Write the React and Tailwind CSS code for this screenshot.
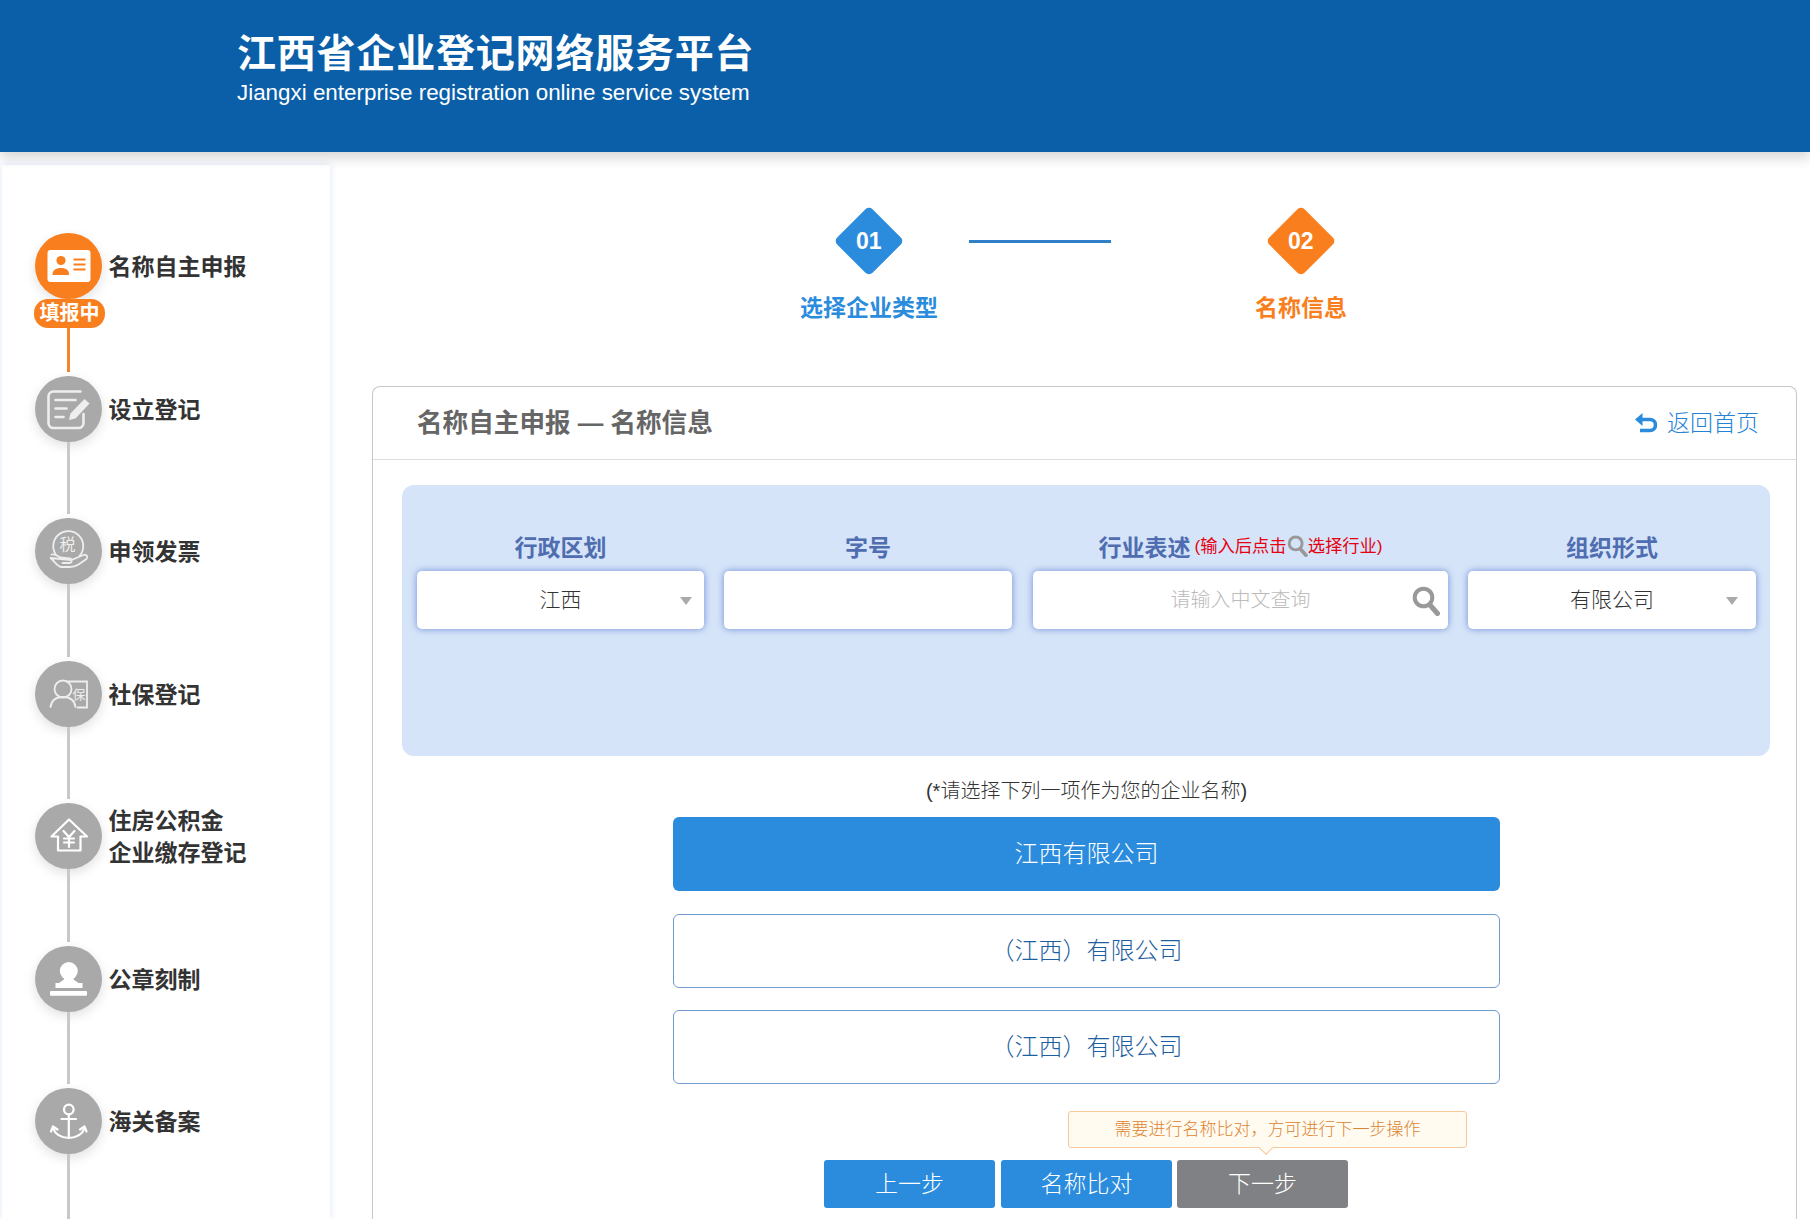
const FONT = "[font-family:'Liberation_Sans','Noto_Sans_CJK_SC',sans-serif]";
const ICON = "block h-full w-full";

function IdCard() {
  return (
    <svg viewBox="0 0 66 66" className={ICON}>
      <rect x="12" y="17" width="43" height="32" rx="3" fill="#fff" />
      <circle cx="25.500" cy="27.500" r="4.600" fill="#f97f1e" />
      <path d="M17 42c0-5 3-7 8.500-7s8 2 8 7z" fill="#f97f1e" />
      <path d="M38 26.500h12M38 31.500h12M38 36.500h12" stroke="#f97f1e" strokeWidth="1.800" />
    </svg>
  );
}
function Form() {
  return (
    <svg viewBox="0 0 66 66" className={ICON} fill="none" stroke="#eee" strokeWidth="2.600" strokeLinecap="round">
      <path d="M45 15.500H18a5 5 0 0 0-5 5V47a5 5 0 0 0 5 5h25a5 5 0 0 0 5-5V38" />
      <path d="M20 24h20M20 32.500h11M20 41h8" />
      <path d="M49 23l5 4.500-14 15-6.500 1.500 1.500-6.500z" fill="#eee" stroke="none" />
    </svg>
  );
}
function Tax() {
  return (
    <svg viewBox="0 0 66 66" className={ICON} fill="none" stroke="#eee" strokeWidth="1.800" strokeLinecap="round" strokeLinejoin="round">
      <path d="M20 36a15 15 0 1 1 24 2" />
      <path d="M16 36.500c3-1 6 1 9 3l9 1c3 .3 3 4.500 0 4.500h-7M36 42l12-5c3-1 5 2 3 4l-8 5.500c-3 2-6 2.500-9 2.500h-8c-5-1-7-6-11-9z" />
      <text x="32" y="32" textAnchor="middle" fontSize="16" fill="#eee" stroke="none" fontFamily="'Noto Sans CJK SC',sans-serif">税</text>
    </svg>
  );
}
function Insure() {
  return (
    <svg viewBox="0 0 66 66" className={ICON} fill="none" stroke="#eee" strokeWidth="1.800" strokeLinecap="round">
      <circle cx="27.500" cy="28" r="8.500" />
      <path d="M15 46c1-7 6-10 12.500-10S39 39 40 46" />
      <path d="M31 20.500h20.500v26H42" />
      <text x="43.500" y="38" textAnchor="middle" fontSize="13" fill="#eee" stroke="none" fontFamily="'Noto Sans CJK SC',sans-serif">保</text>
    </svg>
  );
}
function House() {
  return (
    <svg viewBox="0 0 66 66" className={ICON} fill="none" stroke="#fff" strokeWidth="2.200" strokeLinejoin="round" strokeLinecap="round">
      <path d="M33.500 16.500L16 33.500h6.500V47.500h22.500V33.500h6.500z" />
      <path d="M28 28l5.500 6 5.500-6M33.500 34v10M28.500 35.500h10M28.500 39.500h10" />
    </svg>
  );
}
function Stamp() {
  return (
    <svg viewBox="0 0 66 66" className={ICON} fill="#fff">
      <circle cx="33.300" cy="25" r="9" />
      <path d="M29 31h8.500l1 3 4 2.500v1H24v-1l4-2.500z" />
      <rect x="20" y="37" width="27" height="5" />
      <rect x="14.500" y="45" width="37" height="4.800" rx="1" />
    </svg>
  );
}
function Anchor() {
  return (
    <svg viewBox="0 0 66 66" className={ICON} fill="none" stroke="#fff" strokeWidth="2.200" strokeLinecap="round" strokeLinejoin="round">
      <circle cx="33.300" cy="21.500" r="4.800" />
      <path d="M33.300 26.500V50M26 31h14.500" />
      <path d="M17.500 40c2 6 8 9.500 15.800 10 7.800-.5 13.800-4 15.800-10" />
      <path d="M15.500 43.500l2-5 4.500 3M51 43.500l-2-5-4.500 3" />
    </svg>
  );
}

const steps = [
  { label: "名称自主申报", Icon: IdCard, active: true },
  { label: "设立登记", Icon: Form },
  { label: "申领发票", Icon: Tax },
  { label: "社保登记", Icon: Insure },
  { label: ["住房公积金", "企业缴存登记"], Icon: House },
  { label: "公章刻制", Icon: Stamp },
  { label: "海关备案", Icon: Anchor },
];

function SideItem({ label, Icon, active }) {
  return (
    <div className="flex h-[142.500px] shrink-0">
      <div className="flex w-[67px] flex-col items-center">
        <div className={`h-[66px] w-[67px] shrink-0 rounded-full shadow-[0_4px_12px_rgba(0,0,0,0.12)] ${active ? "bg-[#f97f1e]" : "bg-[#a9a9a9]"}`}>
          <Icon />
        </div>
        {active && (
          <div className="relative ml-[2px] h-[29px] w-[71px] shrink-0 rounded-[14px] bg-[#f97f1e] text-center text-[20px] leading-[28px] font-bold text-white">
            填报中
          </div>
        )}
        <div className={`mb-[4px] w-[3px] flex-1 ${active ? "bg-[#f5842a]" : "bg-[#c8c8c8]"}`} />
      </div>
      <div className="ml-[6.500px] flex h-[66px] flex-col justify-center pt-[2px] text-[23px] leading-[32px] font-bold text-[#333]">
        {Array.isArray(label) ? label.map((l) => <div key={l}>{l}</div>) : <div>{label}</div>}
      </div>
    </div>
  );
}

function Diamond({ n, color }) {
  return (
    <div className="flex h-[67px] w-[67px] items-center justify-center">
      <div className={`flex h-[50px] w-[50px] shrink-0 rotate-45 items-center justify-center rounded-[5px] ${color}`}>
        <span className="-rotate-45 text-[23px] font-bold text-white">{n}</span>
      </div>
    </div>
  );
}

function Caret({ className }) {
  return <span className={`absolute top-[26px] h-0 w-0 border-x-[6px] border-t-[8px] border-x-transparent border-t-[#aaa] ${className}`} />;
}

function Glass({ className }) {
  return (
    <svg viewBox="0 0 28 30" className={className} fill="none" stroke="#999">
      <circle cx="11.500" cy="11.500" r="8.800" strokeWidth="4" />
      <path d="M18 19l7.500 8.500" strokeWidth="5" strokeLinecap="round" />
    </svg>
  );
}

const inputBox = "relative flex h-[58px] items-center justify-center rounded-[5px] bg-white font-light shadow-[0_0_7px_#6f8cd8]";
const labelBox = "h-[39px] text-center text-[23px] leading-[32px] font-bold text-[#4f6db0]";

export default function App() {
  return (
    <div className={`flex h-screen flex-col overflow-hidden bg-white ${FONT}`}>
      <header className="relative z-10 h-[152px] shrink-0 bg-[#0b5fa8] pt-[30px] pl-[237px] text-white shadow-[0_6px_12px_rgba(0,0,0,0.16)]">
        <h1 className="text-[39px] leading-[48px] font-bold tracking-[0.8px]">江西省企业登记网络服务平台</h1>
        <p className="mt-[2px] text-[22.400px] leading-[26px]">Jiangxi enterprise registration online service system</p>
      </header>

      <div className="flex min-h-0 flex-1 pt-[13px]">
        <aside className="ml-[2px] w-[328px] shrink-0 overflow-hidden pt-[68px] pl-[33px] shadow-[0_0_8px_#dfe6f8]">
          {steps.map((s, i) => (
            <SideItem key={i} {...s} />
          ))}
        </aside>

        <main className="flex min-w-0 flex-1 flex-col pt-[42px] pr-[13px] pl-[42px]">
          <div className="flex items-start pl-[429px]">
            <div className="flex w-[136px] flex-col items-center">
              <Diamond n="01" color="bg-[#2b8cdd]" />
              <div className="mt-[18px] text-[23px] leading-[32px] font-bold whitespace-nowrap text-[#2b8cdd]">选择企业类型</div>
            </div>
            <div className="mt-[33px] ml-[32px] h-[3px] w-[142px] bg-[#2f80c8]" />
            <div className="ml-[144px] flex w-[92px] flex-col items-center">
              <Diamond n="02" color="bg-[#f97f1e]" />
              <div className="mt-[18px] text-[23px] leading-[32px] font-bold whitespace-nowrap text-[#f97f1e]">名称信息</div>
            </div>
          </div>

          <section className="mt-[62px] min-h-0 flex-1 rounded-t-[8px] border border-b-0 border-[#c8c8c8]">
            <div className="flex h-[73px] items-center justify-between border-b border-[#ddd] pr-[37px] pl-[44px]">
              <h2 className="text-[25.600px] font-bold text-[#666]">名称自主申报 — 名称信息</h2>
              <a className="flex items-center text-[23px] font-light text-[#2483d6]">
                <svg viewBox="0 0 22 20" className="mr-[10px] h-[20px] w-[22px]" fill="none" stroke="#2b8cdd" strokeWidth="3.600">
                  <path d="M5 6.500h10a5.500 5.500 0 0 1 0 11H5" />
                  <path d="M7.500 0v13L0 6.500z" fill="#2b8cdd" stroke="none" />
                </svg>
                返回首页
              </a>
            </div>

            <div className="pt-[25px] pr-[26px] pl-[29px]">
              <div className="h-[271px] rounded-[12px] bg-[#d5e4f8] pt-[47px] pr-[13px] pl-[15px]">
                <div className="flex gap-[20px]">
                  <div className="w-[287px]">
                    <div className={labelBox}>行政区划</div>
                    <div className={`${inputBox} text-[21px] text-[#333]`}>江西<Caret className="right-[12px]" /></div>
                  </div>
                  <div className="w-[288px]">
                    <div className={labelBox}>字号</div>
                    <div className={inputBox} />
                  </div>
                  <div className="ml-[1px] w-[415px]">
                    <div className={`${labelBox} flex justify-center whitespace-nowrap`}>
                      行业表述
                      <span className="ml-[4px] flex items-start text-[17.300px] leading-[28px] font-normal text-[#e60012]">
                        (输入后点击
                        <Glass className="mt-[3px] h-[22px] w-[21px]" />
                        选择行业)
                      </span>
                    </div>
                    <div className={`${inputBox} text-[20px] text-[#bbb]`}>
                      请输入中文查询
                      <Glass className="absolute top-[15px] right-[8px] h-[30px] w-[28px]" />
                    </div>
                  </div>
                  <div className="w-[288px]">
                    <div className={labelBox}>组织形式</div>
                    <div className={`${inputBox} text-[21px] text-[#333]`}>有限公司<Caret className="right-[18px]" /></div>
                  </div>
                </div>
              </div>

              <div className="ml-[271px] w-[827px]">
                <p className="mt-[20px] mb-[11px] h-[30px] text-center text-[20px] leading-[30px] font-light text-[#333]">(*请选择下列一项作为您的企业名称)</p>
                <div className="flex flex-col gap-[22.700px]">
                  <div className="flex h-[74px] items-center justify-center rounded-[6px] bg-[#2b8cdd] text-[24px] font-light text-white">江西有限公司</div>
                  <div className="flex h-[74px] items-center justify-center rounded-[6px] border border-[#6f9bd0] text-[24px] font-light text-[#1f5fa0]">（江西）有限公司</div>
                  <div className="flex h-[74px] items-center justify-center rounded-[6px] border border-[#6f9bd0] text-[24px] font-light text-[#1f5fa0]">（江西）有限公司</div>
                </div>

                <div className="relative mt-[76px] flex gap-[6px] pl-[151px]">
                  <div className="absolute top-[-49px] left-[395px] flex h-[37px] w-[399px] items-center justify-center rounded-[3px] border border-[#f5c99b] bg-[#fffbf0] text-[17px] font-light text-[#dd8430]">
                    需要进行名称比对，方可进行下一步操作
                    <span className="absolute bottom-[-6px] left-[192px] h-[10px] w-[10px] rotate-45 border-r border-b border-[#f5c99b] bg-[#fffbf0]" />
                  </div>
                  <button className="h-[48px] w-[171px] rounded-[3px] bg-[#2b8cdd] text-[23px] font-light text-white">上一步</button>
                  <button className="h-[48px] w-[171px] rounded-[3px] bg-[#2b8cdd] text-[23px] font-light text-white">名称比对</button>
                  <button className="-ml-[1px] h-[48px] w-[171px] rounded-[3px] bg-[#808184] text-[23px] font-light text-white">下一步</button>
                </div>
              </div>
            </div>
          </section>
        </main>
      </div>
    </div>
  );
}
